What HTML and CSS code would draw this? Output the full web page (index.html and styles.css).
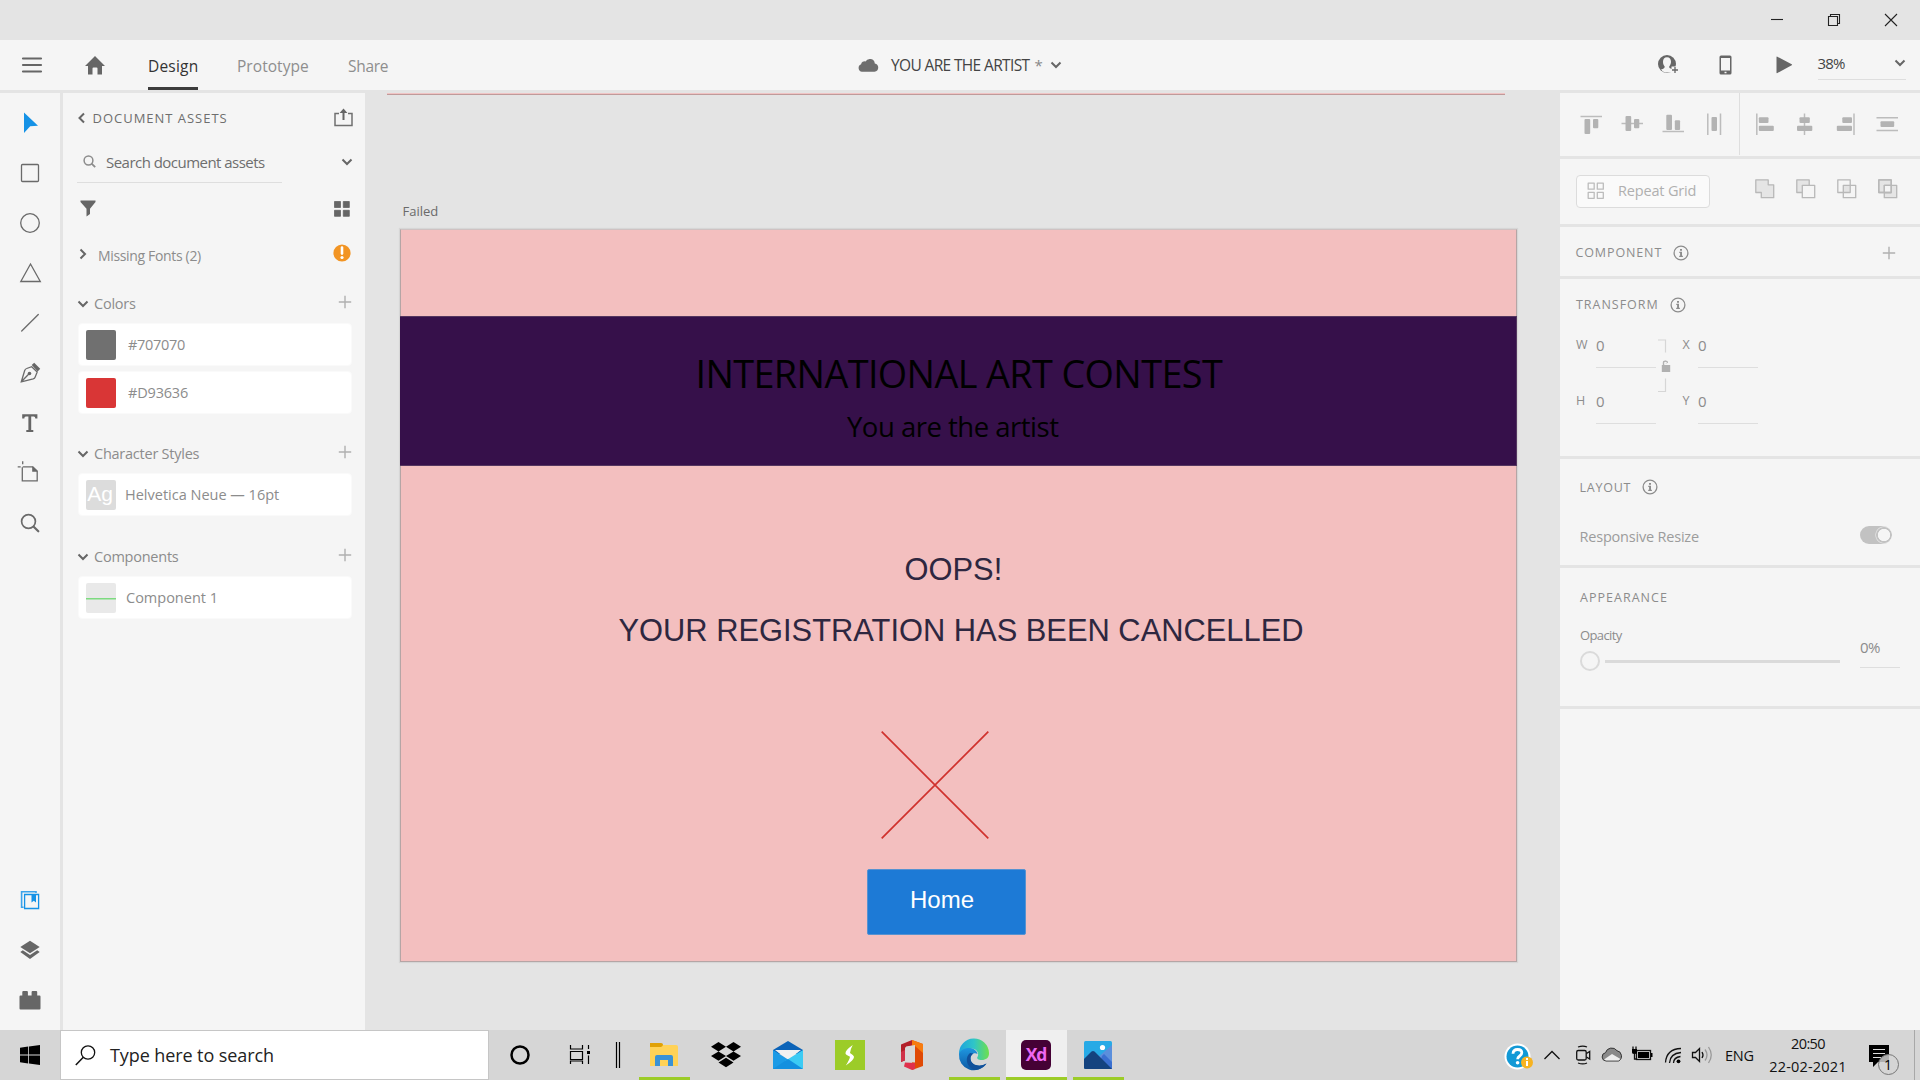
FILE: index.html
```html
<!DOCTYPE html>
<html lang="en">
<head>
<meta charset="utf-8">
<title>YOU ARE THE ARTIST</title>
<link rel="stylesheet" href="styles.css">
</head>
<body>
<svg class="defs" width="0" height="0">
  <symbol id="chev-down" viewBox="0 0 12 12"><path d="M1.500 3.500 6 8l4.500-4.500" fill="none" stroke="currentColor" stroke-width="2"/></symbol>
  <symbol id="chev-left" viewBox="0 0 12 12"><path d="M8 1.500 3.500 6 8 10.500" fill="none" stroke="currentColor" stroke-width="2"/></symbol>
  <symbol id="chev-right" viewBox="0 0 12 12"><path d="M3.500 1.500 8 6l-4.500 4.500" fill="none" stroke="currentColor" stroke-width="2"/></symbol>
  <symbol id="plus" viewBox="0 0 14 14"><path d="M7 .8v12.400M.8 7h12.400" fill="none" stroke="currentColor" stroke-width="1.400"/></symbol>
  <symbol id="info" viewBox="0 0 16 16"><circle cx="8" cy="8" r="6.900" fill="none" stroke="currentColor" stroke-width="1.300"/><path d="M7 3.900h2v1.800H7zM6.300 6.800H9v4h.9v1.100H6.200v-1.100h.9V7.900h-.8z" fill="currentColor"/></symbol>
</svg>

<header class="titlebar">
  <svg class="win" viewBox="0 0 57 40"><path d="M22 19.500h12" /></svg>
  <svg class="win" viewBox="0 0 57 40"><path d="M22.500 16.500h9v9h-9zM24.500 16v-1.500h9v9H32"/></svg>
  <svg class="win" viewBox="0 0 57 40"><path d="m22 14 12 12m0-12-12 12"/></svg>
</header>

<nav class="topbar">
  <div class="top-left">
    <svg class="burger" width="20" height="20" viewBox="0 0 20 20"><path d="M1 3.500h18M1 10h18M1 16.500h18" stroke="#666" stroke-width="2.200" stroke-linecap="round"/></svg>
    <svg class="home" width="20" height="20" viewBox="0 0 20 20"><path d="M10 1 20 11h-3v8.500h-4.500v-6q0-1-1-1h-3q-1 0-1 1v6H3V11H0z" fill="#666"/></svg>
    <span class="tab design">Design</span>
    <span class="tab proto">Prototype</span>
    <span class="tab share">Share</span>
  </div>
  <div class="doc-title">
    <svg width="21" height="14" viewBox="0 0 21 14"><path d="M4 13.800a3.900 3.900 0 0 1-.9-7.500 3.500 3.500 0 0 1 4.400-2.900A5 5 0 0 1 16.800 5.500a4.200 4.200 0 0 1-.3 8.300z" fill="#6e6e6e"/></svg>
    <span class="doc-name">YOU ARE THE ARTIST</span>
    <span class="star">*</span>
    <svg class="c-dark" width="12" height="12"><use href="#chev-down"/></svg>
  </div>
  <div class="top-right">
    <svg width="22" height="22" viewBox="0 0 22 22"><circle cx="9" cy="10" r="9" fill="#666"/><path d="M9 3.300c-2.700 0-4 2-4 4.500 0 2 .7 3.600 1.700 4.600 0 1.700-.8 2-3.700 3.100C5 18.300 7 18.500 9 18.500h5v-3.600c-2.500-.8-2.800-1-2.800-2.500 1.100-1.200 1.800-2.700 1.800-4.600 0-2.500-1.300-4.500-4-4.500z" fill="#f5f5f5"/><path d="M13.500 12.500H19v8h-5.500z" fill="#f5f5f5"/><path d="M17 13v6m-3-3h6" stroke="#666" stroke-width="1.300"/></svg>
    <svg class="phone" width="13" height="20" viewBox="0 0 13 20"><path d="M2 .5h9A1.500 1.500 0 0 1 12.500 2v16a1.500 1.500 0 0 1-1.500 1.500H2A1.500 1.500 0 0 1 .5 18V2A1.500 1.500 0 0 1 2 .5zM2 3v12.500h9V3zM5.500 16.800v1.400h2v-1.400z" fill="#666" fill-rule="evenodd"/></svg>
    <svg class="play" width="17" height="18" viewBox="0 0 17 18"><path d="M.5 1.200Q.5.300 1.400.8L15.700 8.300q.8.500 0 1L1.400 17q-.9.500-.9-.5z" fill="#666"/></svg>
    <div class="zoom-field"><span>38%</span><svg class="c-dark" width="12" height="12"><use href="#chev-down"/></svg></div>
  </div>
</nav>

<main class="workspace">
  <aside class="tools">
    <div class="tool-group">
      <svg viewBox="0 0 32 32"><path d="M10 5.500v20.400l6.200-6.700 7.800-.5z" fill="#1592e6"/></svg>
      <svg viewBox="0 0 32 32"><rect x="7.500" y="7.500" width="17" height="17" rx="1" class="ln"/></svg>
      <svg viewBox="0 0 32 32"><circle cx="16" cy="16" r="9.300" class="ln"/></svg>
      <svg viewBox="0 0 32 32"><path d="M16.500 7 26.300 24.500H6.800z" class="ln"/></svg>
      <svg viewBox="0 0 32 32"><path d="M7.700 24 24.300 7.500" class="ln" stroke-linecap="round"/></svg>
      <svg viewBox="0 0 32 32"><g transform="translate(-.3 -.5)"><path d="M7.600 25.300 11 14q.5-1.500 2-2l5-1.800 5.500 5.300-2 5q-.5 1.400-2 1.900zM7.600 25.300l7.800-8" class="ln"/><circle cx="15.800" cy="17" r="1.800" fill="#666"/><path d="m18 8.500 2.500-2.300 6 6-2.500 2.800z" fill="#666"/></g></svg>
      <svg viewBox="0 0 32 32"><path d="M8.200 7.300h15.200v4.300h-2.100q0-2-1.500-2h-2.600V23h2.100v2h-7v-2h2.100V9.600h-2.600q-1.500 0-1.500 2H8.200z" fill="#666"/></svg>
      <svg viewBox="0 0 32 32"><g transform="translate(-.3 -.7)"><path d="M9 10.500h10.200l4.300 4.300v9.700H8.600V10.900M4 10.500h3M9 5v3" class="ln"/><path d="M18.500 10v5.500H24z" fill="#666"/></g></svg>
      <svg viewBox="0 0 32 32"><circle cx="14.500" cy="14.500" r="6.900" class="ln thick"/><path d="m19.700 19.700 4.600 4.600" class="ln thicker" stroke-linecap="round"/></svg>
    </div>
    <div class="tool-group">
      <svg viewBox="0 0 32 32"><path d="M22 9V7.700H7.600v15.600h2" fill="none" stroke="#3ba3ea" stroke-width="1.600"/><path d="M10.600 10.500h14v14h-14z" fill="#f5f5f5" stroke="#1592e6" stroke-width="1.300"/><path d="M17.500 10.500H22v8l-2.200-1.700-2.300 1.700z" fill="#1592e6"/></svg>
      <svg viewBox="0 0 32 32"><path d="m16 6.800 9.700 6.200-9.700 6.300L6.300 13z" fill="#666"/><path d="m6.300 18 2.500-1.700 7.200 4.700 7.200-4.700 2.500 1.700-9.700 7z" fill="#666"/></svg>
      <svg viewBox="0 0 32 32"><path d="M6.500 11.500h1.800V8q0-1 1-1h3.600q1 0 1 1v3.500h3.700V8q0-1 1-1h3.600q1 0 1 1v3.500h2.300q1 0 1 1v12q0 1-1 1H6.500q-1 0-1-1v-12q0-1 1-1z" fill="#666"/></svg>
    </div>
  </aside>

  <aside class="assets">
    <div class="row head">
      <svg class="c-dark back" width="12" height="12"><use href="#chev-left"/></svg>
      <span class="head-label">DOCUMENT ASSETS</span>
      <svg class="end up" width="19" height="19" viewBox="0 0 19 19"><path d="M5 5.500H1v12h17v-12h-4" fill="none" stroke="#707070" stroke-width="1.500"/><path d="M8.500 12V5H5.600l3.900-4.600L13.400 5h-2.900v7z" fill="#666"/></svg>
    </div>
    <div class="row search">
      <svg width="13" height="13" viewBox="0 0 13 13"><circle cx="5.500" cy="5.500" r="4.400" fill="none" stroke="#8c8c8c" stroke-width="1.500"/><path d="m8.600 8.600 3.600 3.600" stroke="#8c8c8c" stroke-width="1.800"/></svg>
      <span class="search-label">Search document assets</span>
      <svg class="end c-dark" width="12" height="12"><use href="#chev-down"/></svg>
    </div>
    <div class="rule"></div>
    <div class="row filter">
      <svg width="16" height="17" viewBox="0 0 16 17"><path d="M.5.500h15v1.600L10 8.800v5.300l-3.500 2.400V8.800L.5 2.100z" fill="#666"/></svg>
      <svg class="end" width="16" height="16" viewBox="0 0 16 16"><path d="M.5.500h6v6h-6zM9.300.500h6v6h-6zM.5 9.300h6v6h-6zM9.300 9.300h6v6h-6z" fill="#666" stroke="#666" stroke-linejoin="round" stroke-width=".8"/></svg>
    </div>
    <div class="row missing">
      <svg class="c-dark raise" width="12" height="12"><use href="#chev-right"/></svg>
      <span class="missing-label">Missing Fonts (2)</span>
      <svg class="end warn" width="18" height="18" viewBox="0 0 18 18"><circle cx="9" cy="9" r="8.600" fill="#f29423"/><path d="M9 3.600v6" stroke="#fff" stroke-width="2.600" stroke-linecap="round"/><circle cx="9" cy="13.500" r="1.600" fill="#fff"/></svg>
    </div>
    <div class="row group"><svg class="c-dark" width="12" height="12"><use href="#chev-down"/></svg><span>Colors</span><svg class="end add" width="14" height="14"><use href="#plus"/></svg></div>
    <div class="card"><i class="swatch grey"></i><span class="hex">#707070</span></div>
    <div class="card"><i class="swatch red"></i><span class="hex two">#D93636</span></div>
    <div class="row group second"><svg class="c-dark" width="12" height="12"><use href="#chev-down"/></svg><span>Character Styles</span><svg class="end add" width="14" height="14"><use href="#plus"/></svg></div>
    <div class="card"><i class="swatch ag">Ag</i><span class="style-name">Helvetica Neue — 16pt</span></div>
    <div class="row group third"><svg class="c-dark" width="12" height="12"><use href="#chev-down"/></svg><span>Components</span><svg class="end add" width="14" height="14"><use href="#plus"/></svg></div>
    <div class="card"><i class="swatch comp"></i><span class="comp-name">Component 1</span></div>
  </aside>

  <section class="canvas">
    <div class="prev-board"></div>
    <span class="board-name">Failed</span>
    <div class="board">
      <div class="banner">
        <span class="t contest">INTERNATIONAL ART CONTEST</span>
        <span class="t artist">You are the artist</span>
      </div>
      <span class="t oops">OOPS!</span>
      <span class="t cancelled">YOUR REGISTRATION HAS BEEN CANCELLED</span>
      <svg class="cross" width="108" height="108" viewBox="0 0 108 108"><path d="m.7.700 106.600 106.600M107.300.700.7 107.300" stroke="#d0312d" stroke-width="1.700"/></svg>
      <div class="home-btn"><span>Home</span></div>
    </div>
  </section>

  <aside class="props">
    <section class="aligns">
      <div class="al-left">
        <svg viewBox="0 0 24 24"><path d="M1.500 4.500h21.500" class="thin"/><rect x="5.500" y="7" width="5.700" height="15" rx="1"/><rect x="14" y="7" width="5.300" height="9.300" rx="1"/></svg>
        <svg viewBox="0 0 24 24"><path d="M1.500 11.500H23" class="thin"/><rect x="5.500" y="4" width="5.700" height="15" rx="1"/><rect x="14" y="7" width="5.300" height="9.300" rx="1"/></svg>
        <svg viewBox="0 0 24 24"><path d="M1.500 19.500H23" class="thin"/><rect x="5.300" y="2.700" width="5.700" height="15.300" rx="1"/><rect x="13.800" y="8.300" width="5.300" height="9.700" rx="1"/></svg>
        <svg viewBox="0 0 24 24"><path d="M5.800 1.500V23M18.500 1.500V23" class="thin"/><rect x="9.500" y="5" width="5.500" height="14" rx="1"/></svg>
      </div>
      <div class="al-right">
        <svg viewBox="0 0 24 24"><path d="M4.800 1.500V23" class="thin"/><rect x="6.800" y="5.300" width="9.700" height="5.700" rx="1"/><rect x="6.800" y="13.700" width="15" height="5.300" rx="1"/></svg>
        <svg viewBox="0 0 24 24"><path d="M11.500 1.500V23" class="thin"/><rect x="6.500" y="5.300" width="10.300" height="5.700" rx="1"/><rect x="4" y="13.700" width="15.300" height="5.300" rx="1"/></svg>
        <svg viewBox="0 0 24 24"><path d="M20 1.500V23" class="thin"/><rect x="8.300" y="5.300" width="9.700" height="5.700" rx="1"/><rect x="2.800" y="13.700" width="15.200" height="5.300" rx="1"/></svg>
        <svg viewBox="0 0 24 24"><path d="M1.500 5.800H23M1.500 18.500H23" class="thin"/><rect x="5.500" y="9.300" width="13.700" height="5.600" rx="1"/></svg>
      </div>
    </section>
    <section class="repeat">
      <div class="grid-btn"><svg width="18" height="18" viewBox="0 0 18 18"><path d="M1.200 1.200h6v6h-6zM10.300 1.200h6v6h-6zM1.200 10.300h6v6h-6zM10.300 10.300h6v6h-6z" fill="none" stroke="#bcbcbc" stroke-width="1.300" stroke-linejoin="round"/></svg><span>Repeat Grid</span></div>
      <div class="bools">
        <svg viewBox="0 0 20 20"><path d="M.8.800h12.400v5h5.500v12.900H6.300v-5.200H.8z" class="fillb"/></svg>
        <svg viewBox="0 0 20 20"><path d="M.8.800h12.400v12.700H.8z" class="fillb"/><path d="M6.300 6.300h12.400v12.400H6.300z" class="hollow"/></svg>
        <svg viewBox="0 0 20 20"><path d="M6.300 6.300h6.900v7.200H6.300z" fill="#e3e3e3"/><path d="M.8.800h12.400v12.700H.8zM6.300 6.300h12.400v12.400H6.300z" class="noneb"/></svg>
        <svg viewBox="0 0 20 20"><path d="M.8.800h12.400v12.700H.8zM6.300 6.300h12.400v12.400H6.300z" class="fillb"/><path d="M6.300 6.300h6.900v7.200H6.300z" class="hollow"/><path d="M.8.800h12.400v12.700H.8z" class="noneb"/></svg>
      </div>
    </section>
    <section class="component">
      <span class="label lcomp">COMPONENT</span><svg class="info" width="16" height="16"><use href="#info"/></svg>
      <svg class="end add" width="14" height="14"><use href="#plus"/></svg>
    </section>
    <section class="transform">
      <div class="thead"><span class="label ltrans">TRANSFORM</span><svg class="info" width="16" height="16"><use href="#info"/></svg></div>
      <div class="fields">
        <div class="pair"><label>W</label><b>0</b></div>
        <svg class="lock" width="14" height="54" viewBox="0 0 14 54"><path d="M0 1h7.500v12.500M0 52.500h7.500V39.500" fill="none" stroke="#d6d6d6" stroke-width="1.200"/><path d="M3.800 26h8.400v7H3.800zM4.800 26v-2.200q0-2.300 2.600-2.300t2.600 2.300" fill="#b0b0b0"/><path d="M5.600 26v-2q0-1.700 1.900-1.700 1.700 0 1.900 1.500" fill="#f5f5f5" stroke="#b0b0b0" stroke-width="1.100"/></svg>
        <div class="pair"><label>X</label><b>0</b></div>
        <div class="pair"><label>H</label><b>0</b></div>
        <div class="pair"><label>Y</label><b>0</b></div>
      </div>
    </section>
    <section class="layout">
      <div class="lhead"><span class="label llay">LAYOUT</span><svg class="info" width="16" height="16"><use href="#info"/></svg></div>
      <div class="resize"><span>Responsive Resize</span><i class="toggle"></i></div>
    </section>
    <section class="appearance">
      <div class="ahead label">APPEARANCE</div>
      <div class="opacity">
        <div class="op-main"><span>Opacity</span><div class="slider"><i class="knob"></i><i class="track"></i></div></div>
        <div class="op-val">0%</div>
      </div>
    </section>
    <section class="rest"></section>
  </aside>
</main>

<footer class="taskbar">
  <div class="start"><svg width="20" height="20" viewBox="0 0 20 20"><path d="M0 2.800 8.200 1.600v8H0zM9 1.500 20 0v9.600H9zM0 10.400h8.200v8.100L0 17.300zM9 10.400h11V20L9 18.500z"/></svg></div>
  <div class="searchbox"><svg width="21" height="21" viewBox="0 0 21 21"><circle cx="13" cy="7.500" r="6.700" fill="none" stroke="#111" stroke-width="1.300"/><path d="M8.300 12.300.8 20" stroke="#111" stroke-width="1.500"/></svg><span>Type here to search</span></div>
  <svg class="app" viewBox="0 0 62 50"><circle cx="31" cy="25" r="8.500" fill="none" stroke="#000" stroke-width="2.500"/></svg>
  <svg class="app tv" viewBox="0 0 60 50"><path d="M19.500 15v4h12v-4M19.500 21.500h12v8h-12zM19.500 34v-3h12v3M37.500 15v4M37.500 25.500V34" fill="none" stroke="#000" stroke-width="1.200"/><path d="M36 21h3v3h-3z"/></svg>
  <svg class="app bars" viewBox="0 0 22 50"><path d="M5.500 12v26M8.500 12v26" stroke="#000" stroke-width="1.200"/></svg>
  <svg class="app run" viewBox="0 0 62 50"><path d="M17 15q0-2 2-2h9l2 2h13q2 0 2 2v19H17z" fill="#ffd257"/><path d="M17 13h11q2 0 2 1.500T28 17H17z" fill="#e0a106"/><path d="M22 36V27q0-2 2-2h14q2 0 2 2v9h-5v-6h-8v6z" fill="#3a92d6"/></svg>
  <svg class="app" viewBox="0 0 62 50"><path d="m23.500 12 7.500 4.700-7.500 4.700-7.500-4.700zM38.500 12l7.500 4.700-7.500 4.700-7.500-4.700zM23.500 21.400l7.500 4.700-7.500 4.700-7.500-4.700zM38.500 21.400l7.500 4.700-7.500 4.700-7.500-4.700zM23.500 32.400l7.500-4.700 7.500 4.700-7.500 4.800z"/></svg>
  <svg class="app" viewBox="0 0 62 50"><path d="M16 20 31 11l15 9v4H16z" fill="#0b63b8"/><path d="M18 20h26L31 30z" fill="#f1f1f1"/><path d="M16 20v19h30z" fill="#1c9be6"/><path d="M46 20 28 31l18 8z" fill="#3ccbf4"/><path d="m31 29 15 10H16z" fill="#1490df"/></svg>
  <svg class="app" viewBox="0 0 62 50"><path d="M16 10h30v30H16z" fill="#9ccc28"/><path d="M33.700 15q-7.700 5.500-7.200 8.500.3 1.200 4.500 3.200-.5 3-4.200 8.800 8-5.500 8.200-8.500 0-1.500-4-4 .5-4 2.700-8z" fill="#fff"/></svg>
  <svg class="app" viewBox="0 0 62 50"><path d="M31 10 20 14.500V32l4-1.500V17.500l8-2z" fill="#b3202a"/><path d="M20 22v10l4-2V20z" fill="#d0324a"/><path d="m31 10 11 4v22l-11 4V10z" fill="#e04a06"/><path d="m31 10 11 4v9L34 16h-3z" fill="#f77c10"/><path d="M25 16.500 34 15v17.500l-10-.5z" fill="#d8d8d8"/><path d="M23 36.500 31 40l3-1v-6l-10-.5z" fill="#e0304c"/></svg>
  <svg class="app run" viewBox="0 0 62 50"><defs><linearGradient id="eg" x1="0" x2="1"><stop offset="0" stop-color="#1fa3dd"/><stop offset=".5" stop-color="#2fc5c8"/><stop offset="1" stop-color="#6ee04c"/></linearGradient><linearGradient id="eb" x1="0" x2="0" y1="0" y2="1"><stop offset="0" stop-color="#1f97e0"/><stop offset="1" stop-color="#0c59a4"/></linearGradient></defs><path d="M16 24a15 15 0 0 1 30-1c.2 5-3.500 7-7 7-4 0-5.600-1.500-4.500-3 2-3.500-.5-8.500-6.500-8.500-5.500 0-9.500 2-11.500 5.500z" fill="url(#eg)"/><path d="M16 24c1.500-4 6-6.500 11-6 4 .5 7 3 7.500 6-3-2-7 0-7 4.500 0 6 7 9 13 6.500l3-1.500A15 15 0 0 1 16 24z" fill="url(#eb)"/><path d="M27 23c-5 4-4.500 13 4 17 5 0 10-2.500 12.500-6.500-7 4-16 1.500-16-5 0-2 1-4 3-5z" fill="#10509a"/></svg>
  <div class="app run active"><span class="xd">Xd</span></div>
  <svg class="app run" viewBox="0 0 62 50"><rect x="17" y="11" width="28" height="28" rx="1.500" fill="#27aae6"/><path d="M45 15v22l-15-9z" fill="#5b8fdc"/><path d="m35 26 2-2 8 8v7H31z" fill="#3a6fd0"/><path d="m17 29 7.500-7.500q1.500-1 3 0L45 39H18.500q-1.500 0-1.500-1.500z" fill="#14437f"/><circle cx="35.500" cy="17.500" r="2.600" fill="#fff"/></svg>
  <div class="tray">
    <svg viewBox="0 0 32 50"><circle cx="13.500" cy="26.500" r="13" fill="#fff"/><circle cx="13.500" cy="26.500" r="11" fill="#1299d6"/><path d="M9 23.700q.2-4.200 4.600-4.200 4.200 0 4.200 3.300 0 1.800-2.100 3.200-2 1.300-2.100 3.200" fill="none" stroke="#fff" stroke-width="2.800"/><circle cx="13.600" cy="32.800" r="1.800" fill="#fff"/><circle cx="23" cy="32.500" r="6" fill="#f7b321"/><path d="M22 31h2v5h-2zM22 28h2v2h-2z" fill="#fff"/></svg>
    <svg viewBox="0 0 32 50"><path d="m8.500 29 7.500-7.500 7.500 7.500" class="tl"/></svg>
    <svg viewBox="0 0 32 50"><rect x="8.700" y="20.500" width="9.500" height="9.500" rx="1.500" class="tl"/><path d="m18.500 23.500 3.200-2v7.500l-3.200-2M10 17q5-1.800 9 0M10 33q5 1.800 9 0" class="tl"/></svg>
    <svg viewBox="0 0 32 50"><path d="M6 31a4.200 4.200 0 0 1-.5-8.300 6.500 6.500 0 0 1 11.500-2 5.500 5.500 0 0 1 1.500 10.300z" fill="#8a8a8a" stroke="#333"/><path d="M4 29.500 12 24l8.500 5-2 1.500H6z" fill="#eee"/></svg>
    <svg viewBox="0 0 32 50"><rect x="4.500" y="20.500" width="14" height="9" class="tl"/><path d="M6 22h11v6H6zM19 23h1.500v4H19zM0 19h5v3.500q0 1.500-2.500 1.500T0 22.500z"/><path d="M1 16.500V19M4 16.500V19M2.500 24v5H5" class="tl"/></svg>
    <svg viewBox="0 0 32 50"><path d="M1.500 32.500Q2.500 19 17 18.500M5.500 33Q6 23.500 17 22.500M9.500 33q0-5.500 7-6.500" class="tl"/><circle cx="14.500" cy="31.300" r="1.900"/></svg>
    <svg viewBox="0 0 32 50"><path d="M-3.500 22.500h3l4-4v13l-4-4h-3z" class="tl"/><path d="M6 22q2 3 0 6" class="tl"/><path d="M9 19.500q4 5.500 0 11M12.500 17q5.500 8 0 16" class="tl dim"/></svg>
    <span class="lang">ENG</span>
    <div class="clock"><span class="time">20:50</span><span class="date">22-02-2021</span></div>
    <div class="notif"><svg width="30" height="32" viewBox="0 0 30 32"><path d="M0 0h20v17H9l-5 5v-5H0z"/><path d="M4 4.500h12M4 8.500h12M4 12.500h8" stroke="#ddd" stroke-width="1.200"/><circle cx="19.500" cy="19.500" r="10" fill="#d4d4d4" fill-opacity=".82" stroke="#777"/></svg><span>1</span></div>
  </div>
</footer>
</body>
</html>
```
FILE: styles.css
```css
* { box-sizing: border-box; }
body {
  margin: 0; width: 1920px; height: 1080px; overflow: hidden;
  display: flex; flex-direction: column;
  background: #e4e4e4; color: #8c8c8c;
  font-family: "Open Sans", "Noto Sans", sans-serif;
  font-size: 14.5px; white-space: nowrap;
}
svg { display: block; flex: none; overflow: visible; }
i { font-style: normal; }
.defs { position: absolute; }
.c-dark { color: #666; }
.end { margin-left: auto; }
.add { color: #b0b0b0; }

.titlebar { height: 40px; display: flex; justify-content: flex-end; }
.win { width: 57px; height: 40px; fill: none; stroke: #222; stroke-width: 1.1; }

.topbar { height: 50px; margin-bottom: 3px; background: #f5f5f5; display: flex; }
.top-left { width: 858px; display: flex; align-items: center; }
.burger { margin-left: 22px; }
.home { margin-left: 43px; }
.tab { font-size: 15.5px; line-height: 52px; height: 50px; color: #8e8e8e; }
.design { margin-left: 43px; width: 50px; color: #333; letter-spacing: .2px; border-bottom: 3px solid #3c3c3c; }
.proto { margin-left: 39px; width: 111px; letter-spacing: .05px; }
.share { letter-spacing: -.3px; }
.doc-title { width: 800px; display: flex; align-items: center; line-height: 49px; font-size: 15.5px; color: #444; }
.doc-title svg:first-child { margin-right: 12px; }
.doc-name { letter-spacing: -.64px; width: 143.500px; }
.star { color: #888; font-size: 15px; width: 15px; }
.top-right { display: flex; align-items: center; }
.phone { margin-left: 39px; }
.play { margin: 0 24.500px 0 44px; }
.zoom-field { width: 88px; height: 34px; margin-top: -4px; display: flex; align-items: center; justify-content: space-between; border-bottom: 1px solid #dedede; color: #444; font-size: 15px; letter-spacing: -.8px; }

.workspace { height: 937px; display: flex; }
.tools { width: 60px; margin-right: 3px; background: #f5f5f5; padding: 5px 0; display: flex; flex-direction: column; justify-content: space-between; }
.tool-group svg { width: 32px; height: 32px; margin: 9px 14px 18px; }
.tool-group svg:last-child { margin-bottom: 9px; }
.ln { fill: none; stroke: #6a6a6a; stroke-width: 1.3; }
.thick { stroke-width: 1.7; }
.thicker { stroke-width: 2.2; }

.assets { width: 302px; background: #f5f5f5; padding: 0 13px 0 15px; }
.row { display: flex; align-items: center; }
.head { height: 50px; color: #6e6e6e; }
.back { margin-left: -2px; }
.head-label { font-size: 13px; letter-spacing: .98px; margin-left: 4.500px; }
.up { position: relative; top: -1px; left: .5px; }
.search { height: 37px; padding-left: 4.500px; color: #6e6e6e; }
.search .end { margin-right: -1px; }
.search-label { font-size: 15px; letter-spacing: -.53px; margin-left: 10.500px; }
.rule { width: 205px; height: 1px; margin: 2px 0 0 -1px; background: #dedede; }
.filter { height: 51px; padding: 0 2px 0 2px; }
.missing { height: 42px; margin-top: 1px; }
.raise { margin: -4px 0 0 -1px; }
.missing-label { font-size: 14px; letter-spacing: -.34px; margin: -1px 0 0 9px; }
.warn { position: relative; top: -3.500px; left: -1px; }
.group { height: 37px; margin-top: 8px; margin-bottom: 1px; letter-spacing: -.24px; }
.group svg:first-child { margin-left: -1px; }
.group span { margin-left: 5px; }
.group .end { position: relative; top: -1.500px; }
.second { margin-top: 21px; }
.third { margin-top: 22px; }
.card { height: 43px; background: #fff; border: 1px solid #fafafa; border-radius: 4px; display: flex; align-items: center; padding-left: 7px; }
.card + .card { margin-top: 5px; }
.swatch { width: 30px; height: 30px; border-radius: 2px; margin-right: 12px; }
.grey { background: #707070; }
.red { background: #d93636; }
.ag { background: #dcdcdc; color: #fff; font: 21px/27px "Liberation Sans", Arial, sans-serif; text-align: center; margin-right: 9px; text-indent: -2px; }
.comp { background: linear-gradient(#7ddb80, #7ddb80) 0 15px / 30px 1.500px no-repeat #e9e9e9; margin-right: 10px; }
.hex { letter-spacing: -.3px; }
.two { letter-spacing: -.18px; }
.style-name { letter-spacing: 0; }

.canvas { width: 1195px; position: relative; overflow: hidden; }
.prev-board { position: absolute; left: 22px; top: 0; width: 1118px; height: 2px; background: #f0c4c4; border-bottom: 1px solid #c09a9a; }
.board-name { position: absolute; left: 37.500px; top: 108px; line-height: 20px; font-size: 13px; color: #6a6a6a; }
.board { position: absolute; left: 35px; top: 136px; width: 1117px; height: 733px; background: #f3bfbf; border: 1px solid #b5a5a5; border-top-color: #cfc2c2; box-shadow: 0 0 1px 1px rgba(0,0,0,.06); }
.banner { position: absolute; left: -1px; top: 86px; width: 1117px; height: 150px; background: #36104a; border: 1px solid #54365f; border-width: 1px 1px 1px 0; }
.t { position: absolute; line-height: 40px; }
.contest { left: 295.500px; top: 36.500px; font-size: 37.8px; letter-spacing: -.62px; color: #000; }
.artist { left: 447px; top: 89.500px; font-size: 27.5px; letter-spacing: -.5px; color: #000; }
.oops, .cancelled { font: 30.85px/40px "Liberation Sans", Arial, sans-serif; color: #2e2740; }
.oops { left: 503.500px; top: 319.500px; }
.cancelled { left: 217.500px; top: 380.500px; }
.cross { position: absolute; left: 479.500px; top: 500.500px; }
.home-btn { position: absolute; left: 466px; top: 638.500px; width: 159px; height: 66px; border-radius: 2px; background: #1d7ad6; border: 1px solid #5792d0; color: #fff; font: 24px/60px "Liberation Sans", Arial, sans-serif; padding-left: 42px; }

.props { width: 360px; display: flex; flex-direction: column; gap: 3px; }
.props > section { background: #f5f5f5; }
.aligns { height: 63px; display: flex; fill: #b3b3b3; }
.aligns svg { width: 24px; height: 24px; }
.thin { stroke: #bcbcbc; stroke-width: 1.5; fill: none; }
.al-left, .al-right { display: flex; gap: 17px; align-items: center; height: 62px; }
.al-left { width: 180px; padding-left: 19px; border-right: 1px solid #dedede; }
.al-right { padding-left: 12px; }
.repeat { height: 65px; display: flex; padding: 16px 0 0 16px; }
.grid-btn { width: 134px; height: 33px; border: 1px solid #dcdcdc; border-radius: 4px; background: #fafafa; display: flex; align-items: center; gap: 13px; padding: 0 0 2px 10px; color: #b0b0b0; letter-spacing: -.17px; }
.bools { display: flex; gap: 21px; padding: 4px 0 0 44.500px; }
.bools svg { width: 20px; height: 20px; }
.fillb, .hollow, .noneb { stroke: #b8b8b8; stroke-width: 1.3; stroke-linejoin: round; fill: #e5e5e5; }
.hollow { fill: #f5f5f5; }
.noneb { fill: none; }
.label { font-size: 12.5px; letter-spacing: .88px; color: #8c8c8c; }
.component { height: 49px; display: flex; align-items: center; padding: 2px 24.500px 0 15.500px; }
.info { margin-left: 10.500px; color: #8c8c8c; }
.transform { height: 177px; padding: 15px 0 0 16px; }
.thead, .lhead { display: flex; align-items: center; height: 21px; }
.ltrans { letter-spacing: .98px; }
.ltrans + .info { margin-left: 11px; }
.fields { display: grid; grid-template-columns: 81px 25.500px auto; grid-template-rows: 56px 56px; padding-top: 17px; }
.pair { display: flex; height: 37px; width: 80px; line-height: 27px; }
.pair label { width: 20px; font-size: 12.5px; line-height: 26px; }
.pair b { width: 60px; height: 36px; font-weight: 400; font-size: 15px; border-bottom: 1px solid #dedede; }
.pair:nth-child(3), .pair:nth-child(5) { grid-column: 3; width: 76px; }
.pair:nth-child(3) label, .pair:nth-child(5) label { width: 15.500px; }
.pair:nth-child(4) { grid-column: 1; }
.lock { margin: 7px 0 0 1px; }
.layout { height: 106px; padding: 17.500px 28px 0 19.500px; }
.llay { letter-spacing: .75px; }
.resize { display: flex; justify-content: space-between; align-items: center; height: 40px; margin-top: 19px; color: #9c9c9c; letter-spacing: -.2px; }
.toggle { width: 32px; height: 18px; border-radius: 9px; background: radial-gradient(circle at 24px 9px, #f5f5f5 0 5.800px, #c2c2c2 6.500px 7.500px, #dadada 8px 8.500px, #c2c2c2 9px); margin-top: -4px; }
.appearance { height: 138px; padding: 19px 20px 0 20px; }
.ahead { height: 21px; line-height: 21px; letter-spacing: 1.03px; }
.opacity { display: flex; justify-content: space-between; padding-top: 16px; }
.op-main { font-size: 13px; letter-spacing: -.6px; line-height: 22px; }
.slider { display: flex; align-items: center; gap: 5px; margin-top: 5px; }
.knob { width: 20px; height: 20px; border: 2px solid #dadada; border-radius: 50%; }
.track { width: 235px; height: 3px; background: #dadada; }
.op-val { width: 40px; height: 44px; line-height: 46px; font-size: 15px; letter-spacing: -.6px; border-bottom: 1px solid #dedede; }
.rest { flex: 1; }

.taskbar { height: 50px; background: #d6d6d6; display: flex; color: #111; }
.start { width: 60px; display: flex; align-items: center; justify-content: center; }
.searchbox { width: 429px; border: 1px solid #c6c6c6; background: #fff; display: flex; align-items: center; gap: 14px; padding-left: 14px; font-size: 18px; letter-spacing: -.09px; color: #222; }
.app { width: 62px; height: 50px; position: relative; }
.tv { width: 60px; }
.bars { width: 22px; }
.run { background: linear-gradient(#9ccc28, #9ccc28) 6px 100% / 51px 3px no-repeat; }
.active { background: linear-gradient(#9ccc28, #9ccc28) 1px 100% / 61px 3px no-repeat, linear-gradient(#efefef, #efefef) 1px 0 / 61px 50px no-repeat; display: flex; align-items: center; justify-content: center; }
.xd { width: 30px; height: 30px; border-radius: 5px; background: #450135; color: #ee68f2; font: bold 17.5px/29px "Open Sans", sans-serif; letter-spacing: -1px; text-align: center; }
.tray { margin-left: 375px; display: flex; }
.tray > svg { width: 32px; height: 50px; }
.tl { fill: none; stroke: #111; stroke-width: 1.3; }
.dim { stroke: #999; }
.lang { width: 42px; margin-left: -3px; line-height: 51px; letter-spacing: -.24px; }
.clock { width: 76px; margin-left: 3px; display: flex; flex-direction: column; align-items: center; line-height: 23px; padding-top: 2px; }
.time { letter-spacing: -.6px; }
.date { letter-spacing: .18px; }
.notif { position: relative; margin-left: 23px; padding-top: 15px; width: 46px; border-right: 1px solid #a8a8a8; }
.notif span { position: absolute; left: 15px; top: 25px; font-size: 14px; line-height: 19px; color: #000; }
```
